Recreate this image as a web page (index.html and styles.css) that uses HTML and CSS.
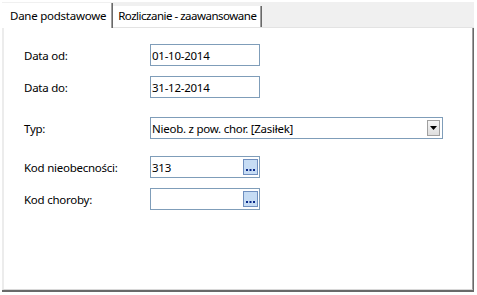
FILE: index.html
```html
<!DOCTYPE html>
<html>
<head>
<meta charset="utf-8">
<link rel="stylesheet" href="styles.css">
</head>
<body>
<div class="window">
  <div class="tabstrip">
    <div class="tab active">Dane podstawowe</div>
    <div class="tab second">Rozliczanie - zaawansowane</div>
  </div>
  <div class="panel">
    <div class="row r1">
      <span class="label">Data od:</span>
      <div class="box short"><span class="val">01-10-2014</span></div>
    </div>
    <div class="row r2">
      <span class="label">Data do:</span>
      <div class="box short"><span class="val">31-12-2014</span></div>
    </div>
    <div class="row r3">
      <span class="label">Typ:</span>
      <div class="box long"><span class="val">Nieob. z pow. chor. [Zasiłek]</span>
        <span class="ddbtn"><svg width="7" height="4" viewBox="0 0 7 4"><path d="M0 0H7L3.5 4Z" fill="#000"/></svg></span>
      </div>
    </div>
    <div class="row r4">
      <span class="label">Kod nieobecności:</span>
      <div class="box short"><span class="val">313</span>
        <span class="dots"><svg width="9" height="2" viewBox="0 0 9 2"><rect x="0" y="0" width="2" height="2" fill="#0a2a8a"/><rect x="3.5" y="0" width="2" height="2" fill="#0a2a8a"/><rect x="7" y="0" width="2" height="2" fill="#0a2a8a"/></svg></span>
      </div>
    </div>
    <div class="row r5">
      <span class="label">Kod choroby:</span>
      <div class="box short"><span class="val"></span>
        <span class="dots"><svg width="9" height="2" viewBox="0 0 9 2"><rect x="0" y="0" width="2" height="2" fill="#0a2a8a"/><rect x="3.5" y="0" width="2" height="2" fill="#0a2a8a"/><rect x="7" y="0" width="2" height="2" fill="#0a2a8a"/></svg></span>
      </div>
    </div>
  </div>
</div>
</body>
</html>
```
FILE: styles.css
```css
html, body {
  margin: 0;
  padding: 0;
  background: #ffffff;
}
body {
  font-family: "Noto Sans", "Segoe UI", sans-serif;
  font-size: 11.5px;
  letter-spacing: -0.25px;
  color: #000;
}
.window {
  padding: 2px 3px 5px 2px;
  height: 288px;
  display: flex;
  flex-direction: column;
}
.tabstrip {
  display: flex;
  align-items: flex-end;
  height: 25px;
  background: #f0f0f0;
  border-bottom: 1px solid #e3e3e3;
}
.tab {
  height: 21px;
  line-height: 20px;
  padding: 0 4px 0 5px;
  background: #ffffff;
  border-right: 1px solid #a0a0a0;
  box-shadow: 1px 0 0 #696969;
  margin-right: 1px;
  white-space: nowrap;
}
.tab.second {
  letter-spacing: -0.5px;
}
.tab.active {
  height: 25px;
  line-height: 25px;
  padding: 0 5px 0 8px;
  margin-bottom: -1px;
  position: relative;
}
.panel {
  flex: 1;
  background: #fff;
  border-left: 2px solid #ececec;
  border-right: 1px solid #a0a0a0;
  border-bottom: 1px solid #d8d8d8;
  box-shadow: 1px 0 0 #696969, 0 1px 0 #696969, 1px 1px 0 #696969, 0 2px 0 #696969, 1px 2px 0 #696969;
  margin-right: 1px;
  padding-left: 20px;
  padding-top: 16px;
}
.row {
  display: flex;
  align-items: center;
  height: 22px;
}
.r2 { margin-top: 10px; }
.r3 { margin-top: 19px; }
.r4 { margin-top: 17px; }
.r5 { margin-top: 10px; }
.label {
  width: 126px;
  flex: none;
}
.box {
  position: relative;
  box-sizing: border-box;
  height: 22px;
  border: 1px solid #7f9db9;
  display: flex;
  align-items: center;
  padding-left: 1px;
}
.box.short { width: 110px; }
.box.long { width: 293px; }
.val { flex: 1; }
.ddbtn {
  position: absolute;
  right: 2px;
  top: 2px;
  width: 13px;
  height: 16px;
  box-sizing: border-box;
  border: 1px solid #a0a0a0;
  background: linear-gradient(#f6f6f6, #dedede);
  display: flex;
  align-items: center;
  justify-content: center;
}
.dots {
  position: absolute;
  right: 1px;
  top: 2px;
  width: 15px;
  height: 16px;
  box-sizing: border-box;
  border: 1px solid #6f8fbf;
  background: #c6dcf4;
  display: flex;
  align-items: flex-end;
  justify-content: center;
  padding-bottom: 3px;
}
.dots svg { display: block; }
```
